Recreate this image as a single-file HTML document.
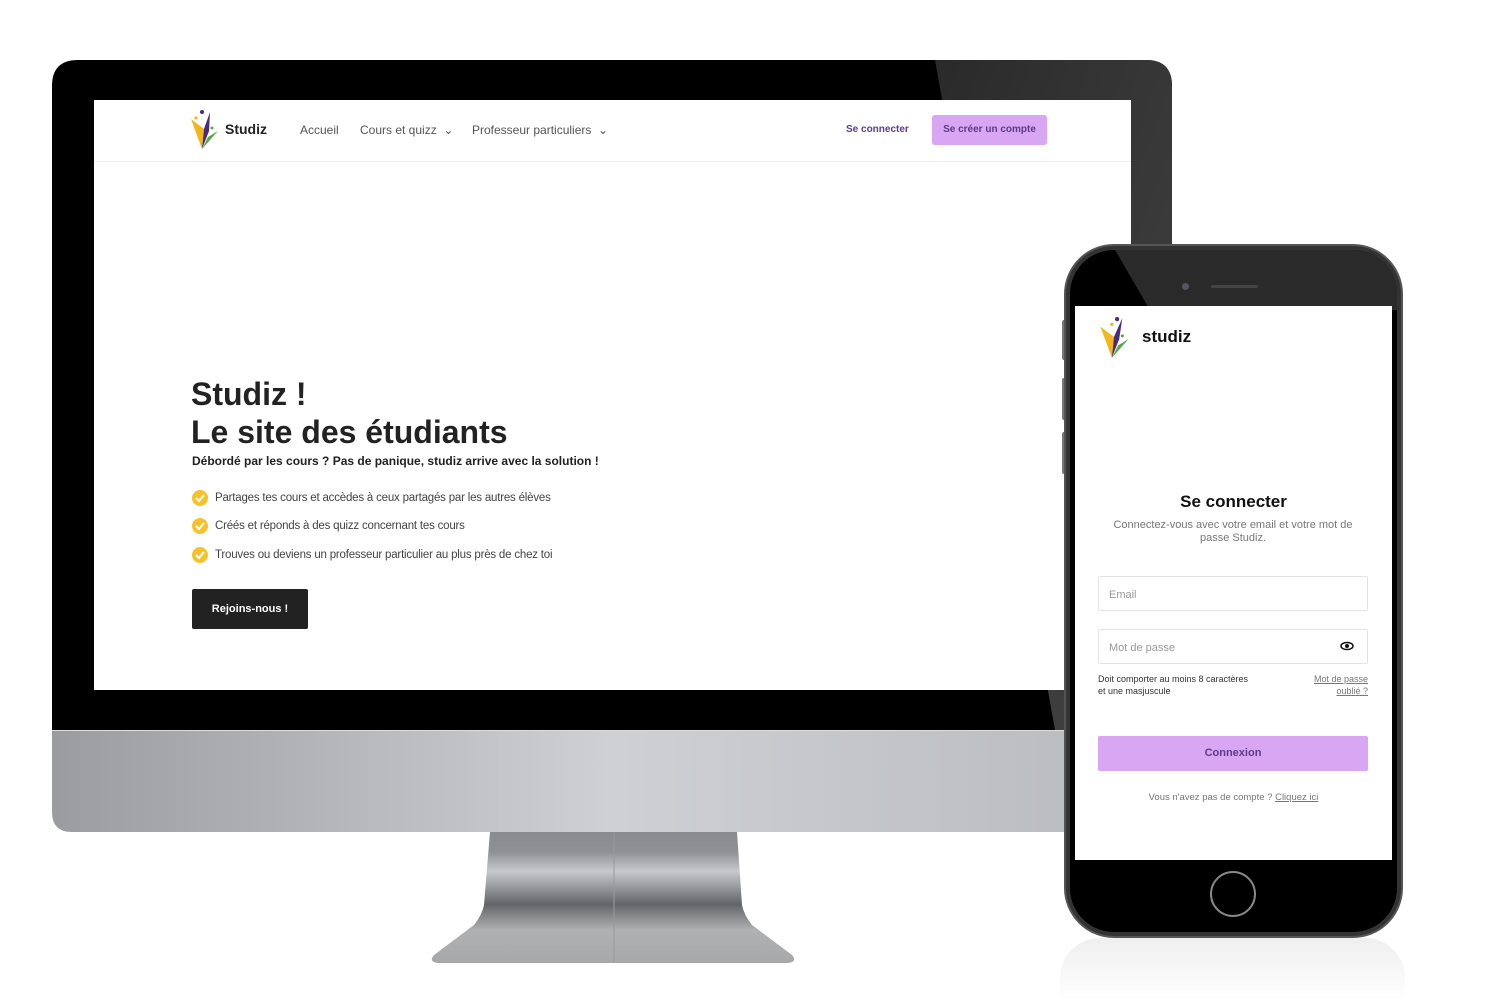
<!DOCTYPE html>
<html><head><meta charset="utf-8">
<style>
*{margin:0;padding:0;box-sizing:border-box}
body{width:1500px;height:1000px;background:#fff;position:relative;overflow:hidden;font-family:"Liberation Sans",sans-serif}
.a{position:absolute}
.nav{font-size:12px;color:#555;white-space:nowrap}
.li{font-size:11.5px;color:#444;white-space:nowrap;letter-spacing:-0.2px}
</style></head><body>

<svg class="a" style="left:0;top:0" width="1500" height="1000">
<defs>
<linearGradient id="st" x1="0" y1="0" x2="0" y2="1">
<stop offset="0" stop-color="#8a8b8f"/><stop offset=".15" stop-color="#8f9094"/><stop offset=".3" stop-color="#c8c9cc"/><stop offset=".55" stop-color="#646568"/><stop offset=".75" stop-color="#b0b1b3"/><stop offset="1" stop-color="#a7a8aa"/>
</linearGradient>
<linearGradient id="chin" x1="0" y1="0" x2="1" y2="0">
<stop offset="0" stop-color="#9a9ca0"/><stop offset=".5" stop-color="#cfd0d3"/><stop offset="1" stop-color="#b8b9bc"/>
</linearGradient>
<linearGradient id="bz" x1="0" y1="0" x2="1" y2="1">
<stop offset="0" stop-color="#2a2a2a"/><stop offset="1" stop-color="#444"/>
</linearGradient>
</defs>
<path d="M490 832 L737 832 L742 905 Q744 915 752 925 L792 955 Q798 962 788 963 L438 963 Q428 962 434 955 L474 925 Q482 915 484 905 Z" fill="url(#st)"/>
<line x1="614" y1="832" x2="614" y2="962" stroke="#999" stroke-width="1"/>
<path d="M78 60 L1146 60 Q1172 60 1172 86 L1172 730 L52 730 L52 86 Q52 60 78 60 Z" fill="#000"/>
<path d="M935 60 L1146 60 Q1172 60 1172 86 L1172 730 L1055 730 Z" fill="url(#bz)"/>
<path d="M52 730 L1172 730 L1172 832 L72 832 Q52 832 52 812 Z" fill="url(#chin)"/>
<line x1="52" y1="730.5" x2="1172" y2="730.5" stroke="#ddd" stroke-width="1"/>
</svg>

<div class="a" style="left:94px;top:100px;width:1037px;height:590px;background:#fff"></div>
<div class="a" style="left:94px;top:161px;width:1037px;height:1px;background:#eee"></div>

<svg class="a" style="left:190px;top:109px" width="30" height="42" viewBox="0 0 30 42">
<circle cx="12" cy="3" r="2" fill="#4a2a7a"/><circle cx="6" cy="9" r="1.6" fill="#f2b71b"/>
<path d="M1 10 L14 20 L12 40 Z" fill="#f2b71b"/>
<path d="M20 3 L14 20 L12 40 L19 22 Z" fill="#4a2a7a"/>
<path d="M12 40 L28 22 L18 28 Z" fill="#5aa845"/><circle cx="22" cy="19" r="1.5" fill="#5aa845"/>
</svg>
<div class="a" style="left:225px;top:121px;font-size:14px;font-weight:bold;color:#222">Studiz</div>
<div class="a nav" style="left:300px;top:123px">Accueil</div>
<div class="a nav" style="left:360px;top:123px">Cours et quizz &nbsp;⌄</div>
<div class="a nav" style="left:472px;top:123px">Professeur particuliers &nbsp;⌄</div>
<div class="a" style="left:846px;top:124px;font-size:10px;font-weight:bold;color:#5b3b8a">Se connecter</div>
<div class="a" style="left:932px;top:115px;width:115px;height:30px;background:#d8a6f2;border-radius:3px;font-size:10px;font-weight:bold;color:#5b3b8a;text-align:center;line-height:30px">Se créer un compte</div>

<div class="a" style="left:191px;top:375px;font-size:32px;font-weight:bold;color:#222;line-height:38px">Studiz !<br>Le site des étudiants</div>
<div class="a" style="left:192px;top:454px;font-size:12px;font-weight:bold;color:#222">Débordé par les cours ? Pas de panique, studiz arrive avec la solution !</div>

<svg class="a" style="left:191px;top:489px" width="18" height="80">
<g fill="#f6c12a"><circle cx="9" cy="9" r="8"/><circle cx="9" cy="37" r="8"/><circle cx="9" cy="66" r="8"/></g>
<g stroke="#fff" stroke-width="2" fill="none"><path d="M5 9 L8 12 L13 6"/><path d="M5 37 L8 40 L13 34"/><path d="M5 66 L8 69 L13 63"/></g>
</svg>
<div class="a li" style="left:215px;top:492px">Partages tes cours et accèdes à ceux partagés par les autres élèves</div>
<div class="a li" style="left:215px;top:520px">Créés et réponds à des quizz concernant tes cours</div>
<div class="a li" style="left:215px;top:549px">Trouves ou deviens un professeur particulier au plus près de chez toi</div>
<div class="a" style="left:192px;top:589px;width:116px;height:40px;background:#222;border-radius:2px;color:#fff;font-size:11px;font-weight:bold;text-align:center;line-height:40px">Rejoins-nous !</div>

<div class="a" style="left:1062px;top:320px;width:4px;height:40px;background:#777;border-radius:2px"></div>
<div class="a" style="left:1062px;top:378px;width:4px;height:42px;background:#777;border-radius:2px"></div>
<div class="a" style="left:1062px;top:432px;width:4px;height:42px;background:#777;border-radius:2px"></div>
<div class="a" style="left:1060px;top:938px;width:345px;height:62px;background:linear-gradient(#e8e8e8,#fff);border-radius:40px 40px 0 0;opacity:.7"></div>
<div class="a" style="left:1064px;top:244px;width:339px;height:694px;border-radius:50px;background:#333;border:2px solid #555"></div>
<div class="a" style="left:1070px;top:250px;width:327px;height:682px;border-radius:44px;background:#000;overflow:hidden">
  <svg class="a" style="left:0;top:0" width="327" height="60"><path d="M45 0 L327 0 L327 60 L80 60 Z" fill="#2a2a2a"/></svg>
</div>
<div class="a" style="left:1182px;top:283px;width:7px;height:7px;border-radius:50%;background:#556"></div>
<div class="a" style="left:1211px;top:285px;width:47px;height:3px;border-radius:2px;background:#444"></div>
<div class="a" style="left:1075px;top:306px;width:317px;height:554px;background:#fff"></div>
<div class="a" style="left:1210px;top:871px;width:46px;height:46px;border-radius:50%;border:2px solid #888;background:#000"></div>

<svg class="a" style="left:1097px;top:316px" width="36" height="44" viewBox="0 0 30 42">
<circle cx="17" cy="3" r="2" fill="#4a2a7a"/><circle cx="12" cy="8" r="1.6" fill="#f2b71b"/>
<path d="M1 10 L14 20 L12 40 Z" fill="#f2b71b"/>
<path d="M22 2 L14 20 L12 40 L19 22 Z" fill="#4a2a7a"/>
<path d="M12 40 L28 22 L18 28 Z" fill="#5aa845"/><circle cx="22" cy="19" r="1.5" fill="#5aa845"/>
</svg>
<div class="a" style="left:1142px;top:327px;font-size:17px;font-weight:bold;color:#111">studiz</div>

<div class="a" style="left:1075px;top:492px;width:317px;text-align:center;font-size:17px;font-weight:bold;color:#111">Se connecter</div>
<div class="a" style="left:1100px;top:519px;width:266px;text-align:center;font-size:11px;color:#777;line-height:13px">Connectez-vous avec votre email et votre mot de passe Studiz.</div>
<div class="a" style="left:1098px;top:576px;width:270px;height:35px;border:1px solid #e3e3e3;border-radius:2px;font-size:11px;color:#999;padding:12px 0 0 10px">Email</div>
<div class="a" style="left:1098px;top:629px;width:270px;height:35px;border:1px solid #e3e3e3;border-radius:2px;font-size:11px;color:#999;padding:12px 0 0 10px">Mot de passe</div>
<svg class="a" style="left:1340px;top:641px" width="14" height="10"><ellipse cx="7" cy="5" rx="6" ry="3.5" fill="none" stroke="#111" stroke-width="1.5"/><circle cx="7" cy="5" r="2" fill="#111"/></svg>
<div class="a" style="left:1098px;top:673px;font-size:9px;color:#333;line-height:12px">Doit comporter au moins 8 caractères<br>et une masjuscule</div>
<div class="a" style="left:1290px;top:673px;width:78px;text-align:right;font-size:9px;color:#777;line-height:12px;text-decoration:underline">Mot de passe<br>oublié ?</div>
<div class="a" style="left:1098px;top:736px;width:270px;height:35px;background:#d8a6f2;border-radius:2px;text-align:center;line-height:35px;font-size:11px;font-weight:bold;color:#5b3b8a">Connexion</div>
<div class="a" style="left:1075px;top:792px;width:317px;text-align:center;font-size:9.5px;color:#777">Vous n'avez pas de compte ? <u>Cliquez ici</u></div>
</body></html>
